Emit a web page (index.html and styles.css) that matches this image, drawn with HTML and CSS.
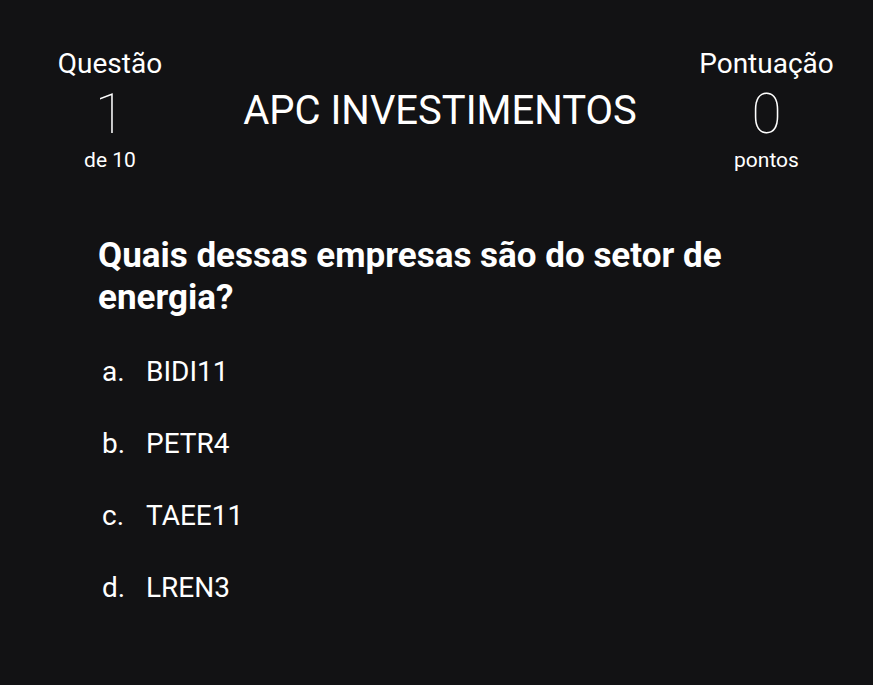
FILE: index.html
```html
<!DOCTYPE html>
<html lang="pt-BR">
<head>
<meta charset="utf-8">
<title>APC Investimentos</title>
<link rel="stylesheet" href="styles.css">
</head>
<body>
<div class="page">
  <header class="header">
    <div class="stat stat-left">
      <span class="stat-label">Questão</span>
      <span class="stat-value">1</span>
      <span class="stat-sub">de 10</span>
    </div>
    <h1 class="title">APC INVESTIMENTOS</h1>
    <div class="stat stat-right">
      <span class="stat-label">Pontuação</span>
      <span class="stat-value">0</span>
      <span class="stat-sub">pontos</span>
    </div>
  </header>
  <main class="quiz">
    <h2 class="question">Quais dessas empresas são do setor de energia?</h2>
    <ul class="options">
      <li class="option"><span class="opt-letter">a.</span><span class="opt-text">BIDI11</span></li>
      <li class="option"><span class="opt-letter">b.</span><span class="opt-text">PETR4</span></li>
      <li class="option"><span class="opt-letter">c.</span><span class="opt-text">TAEE11</span></li>
      <li class="option"><span class="opt-letter">d.</span><span class="opt-text">LREN3</span></li>
    </ul>
  </main>
</div>
</body>
</html>
```
FILE: styles.css
```css
* { box-sizing: border-box; }
html, body {
  margin: 0;
  padding: 0;
  background: #121214;
  color: #ffffff;
  font-family: Roboto, "Liberation Sans", sans-serif;
  height: 100%;
}
.page {
  min-height: 100%;
}
.header {
  display: grid;
  grid-template-columns: 140px 1fr 133px;
  align-items: center;
  padding: 48px 40px 0 40px;
}
.stat {
  display: flex;
  flex-direction: column;
  align-items: center;
}
.stat-label {
  font-size: 28px;
  line-height: 32px;
  font-weight: 400;
}
.stat-value {
  font-size: 55px;
  line-height: 68px;
  font-weight: 100;
}
.stat-sub {
  font-size: 21px;
  line-height: 24px;
}
.title {
  margin: 2px 0 0 0;
  text-align: center;
  font-size: 40px;
  font-weight: 400;
  line-height: 48px;
}
.quiz {
  padding: 63px 98px 0 98px;
}
.question {
  margin: 0;
  font-size: 35px;
  line-height: 42px;
  font-weight: 700;
  max-width: 660px;
}
.options {
  list-style: none;
  margin: 37px 0 0 0;
  padding: 0 0 0 4px;
  display: flex;
  flex-direction: column;
  gap: 40px;
}
.option {
  display: flex;
  font-size: 28px;
  line-height: 32px;
}
.opt-letter {
  width: 44px;
}
```
